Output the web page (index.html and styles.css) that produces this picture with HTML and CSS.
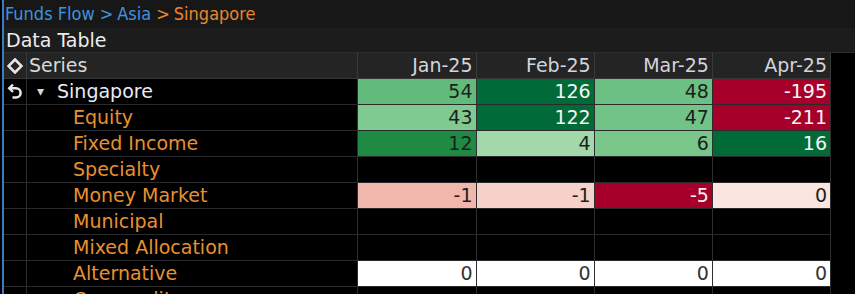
FILE: index.html
```html
<!DOCTYPE html>
<html>
<head>
<meta charset="utf-8">
<link rel="stylesheet" href="styles.css">
</head>
<body>
<div class="frame">
  <div class="crumbs"><span class="crumb">Funds Flow</span><span class="sep">&gt;</span><span class="crumb">Asia</span><span class="sep cur">&gt;</span><span class="cur">Singapore</span></div>
  <div class="title">Data Table</div>
  <table class="grid">
    <colgroup><col class="c-icon"><col class="c-series"><col class="c-val"><col class="c-val"><col class="c-val"><col class="c-val"></colgroup>
    <thead>
      <tr>
        <th class="ic"><svg width="16" height="16" viewBox="0 0 16 16"><path d="M8 1.5 L14.5 8 L8 14.5 L1.5 8 Z" fill="none" stroke="#e6e6e6" stroke-width="2.6"/></svg></th>
        <th class="series">Series</th>
        <th>Jan-25</th><th>Feb-25</th><th>Mar-25</th><th>Apr-25</th>
      </tr>
    </thead>
    <tbody>
      <tr>
        <td class="ic"><svg width="16" height="17" viewBox="0 0 16 17"><path d="M6 1.5 L2.2 5.3 L6 9" fill="none" stroke="#e8e8e8" stroke-width="2.4"/><path d="M2.8 5.3 H9 A4.6 4.6 0 0 1 9 14.5 H5.5" fill="none" stroke="#e8e8e8" stroke-width="2.6"/></svg></td>
        <td class="label top"><span class="tri">&#9662;</span>Singapore</td>
        <td class="g3">54</td><td class="g1">126</td><td class="g3b">48</td><td class="r1">-195</td>
      </tr>
      <tr><td class="ic"></td><td class="label">Equity</td><td class="g4">43</td><td class="g1">122</td><td class="g3c">47</td><td class="r1">-211</td></tr>
      <tr><td class="ic"></td><td class="label">Fixed Income</td><td class="g2">12</td><td class="g5">4</td><td class="g3d">6</td><td class="g1">16</td></tr>
      <tr><td class="ic"></td><td class="label">Specialty</td><td></td><td></td><td></td><td></td></tr>
      <tr><td class="ic"></td><td class="label">Money Market</td><td class="p2">-1</td><td class="p3">-1</td><td class="r1">-5</td><td class="p4">0</td></tr>
      <tr><td class="ic"></td><td class="label">Municipal</td><td></td><td></td><td></td><td></td></tr>
      <tr><td class="ic"></td><td class="label">Mixed Allocation</td><td></td><td></td><td></td><td></td></tr>
      <tr><td class="ic"></td><td class="label">Alternative</td><td class="w">0</td><td class="w">0</td><td class="w">0</td><td class="w">0</td></tr>
      <tr><td class="ic"></td><td class="label">Commodity</td><td></td><td></td><td></td><td></td></tr>
    </tbody>
  </table>
</div>
</body>
</html>
```

FILE: styles.css
```css
html, body {
  margin: 0;
  padding: 0;
  background: #000;
  overflow: hidden;
  height: 294px;
}
body {
  font-family: "DejaVu Sans", sans-serif;
  font-size: 19px;
}
.frame {
  margin-left: 2px;
  border-left: 2px solid #3a7cc0;
  height: 294px;
}
.crumbs {
  height: 28px;
  line-height: 28px;
  background: #171717;
  color: #3f93de;
  padding-left: 1px;
  white-space: nowrap;
  font-family: "DejaVu Sans Condensed", "DejaVu Sans", sans-serif;
  font-size: 18px;
}
.sep {
  margin: 0 4px 0 5px;
}
.cur {
  color: #e8882c;
}
.title {
  height: 24px;
  line-height: 24px;
  background: #1c1c1c;
  color: #ececec;
  padding-left: 2px;
  border-bottom: 1px solid #2c2c2c;
}
.grid {
  border-collapse: separate;
  border-spacing: 0;
  table-layout: fixed;
  width: 827px;
}
.c-icon { width: 23px; }
.c-series { width: 331px; }
.c-val { width: 118px; }
.grid th, .grid td {
  box-sizing: border-box;
  height: 26px;
  padding: 0 3px 0 0;
  border-right: 1px solid #2e2e2e;
  border-bottom: 1px solid #2a2a2a;
  text-align: right;
  white-space: nowrap;
  line-height: 25px;
  overflow: hidden;
}
.grid th {
  background: #242424;
  color: #d2d5dd;
  font-weight: normal;
  border-right-color: #3a3a3a;
  border-bottom-color: #363636;
}
.grid td.ic, .grid th.ic {
  text-align: center;
  padding: 0;
}
.grid th.ic svg { vertical-align: -2px; }
.grid td.ic svg { vertical-align: -2px; }
.grid th.series {
  text-align: left;
  padding-left: 2px;
  color: #d8d8d8;
}
.grid td.label {
  text-align: left;
  padding-left: 46px;
  color: #e8902f;
}
.grid td.label.top {
  padding-left: 10px;
  color: #e9ebf2;
}
.tri {
  font-size: 14px;
  display: inline-block;
  width: 20px;
  vertical-align: 2px;
  color: #d8d8d8;
}
.grid td { color: #1e1e1e; }
.g1 { background: #006a38; color: #f4f4f4 !important; }
.g2 { background: #1f8a43; }
.g3 { background: #63bb7b; }
.g3b { background: #6cc083; }
.g3c { background: #72c387; }
.g3d { background: #79c78b; }
.g4 { background: #7fca91; }
.g5 { background: #a2d8aa; }
.r1 { background: #a6002a; color: #f4f4f4 !important; }
.p2 { background: #f1b7ad; }
.p3 { background: #f6d1c9; }
.p4 { background: #fae5e0; }
.w { background: #ffffff; color: #333 !important; }
```
